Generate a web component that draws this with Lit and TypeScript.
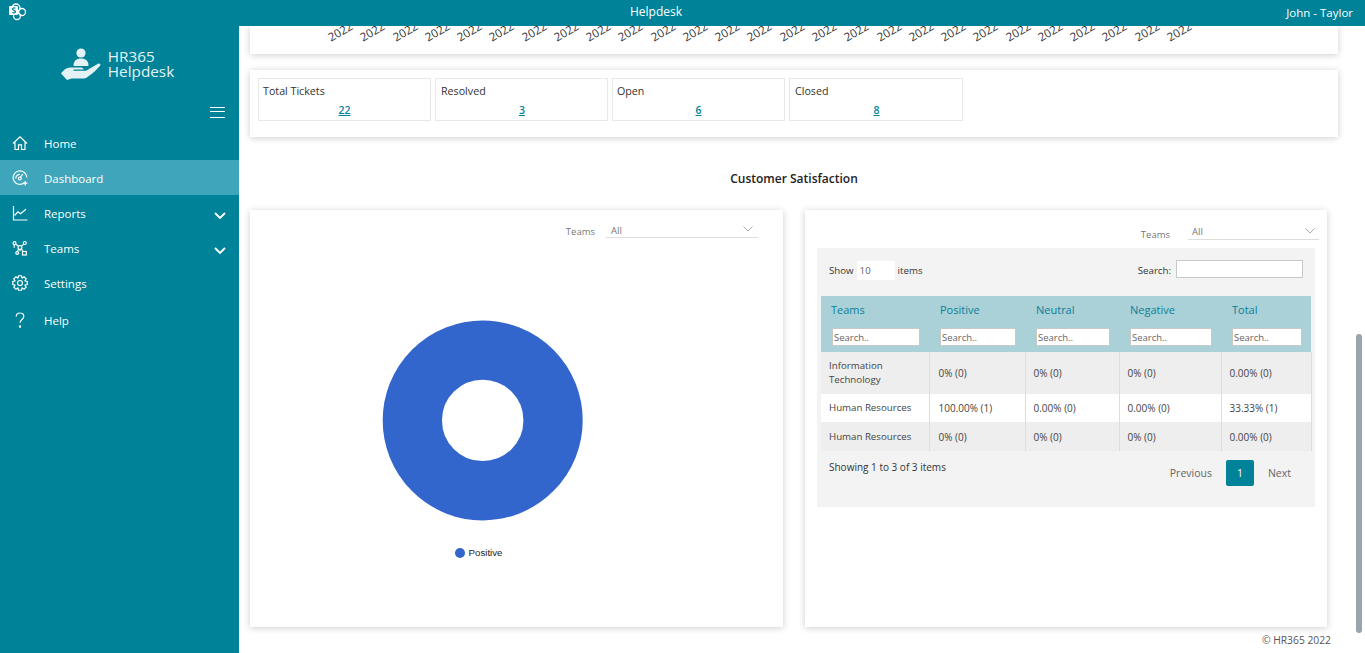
import { LitElement, html, css, svg } from "lit";
import { customElement } from "lit/decorators.js";

const gear = (() => {
  const pts: string[] = [];
  for (let i = 0; i < 8; i++) {
    const a = (i * Math.PI) / 4;
    const p = (r: number, d: number) =>
      `${(8 + r * Math.cos(a + d)).toFixed(2)} ${(8 + r * Math.sin(a + d)).toFixed(2)}`;
    pts.push(p(5.4, -0.38), p(7.4, -0.2), p(7.4, 0.2), p(5.4, 0.38));
  }
  return `M${pts.join("L")}z`;
})();

const icons: Record<string, unknown> = {
  home: svg`<path d="M1 8.500 8 1.800l7 6.700M3 7.300v7.200h3.500v-4.700h3v4.700H13V7.300"/>`,
  dash: svg`<path d="M12.400 12.800A6.800 6.800 0 1 1 14.800 7.500"/><path d="M7.800 8l3-3.800"/><path d="M3.800 8.500a4 4 0 0 1 4-4.200"/><circle cx="7.800" cy="8.500" r="1.500"/><path d="M13.200 11v4.400M11 13.200h4.400"/>`,
  reports: svg`<path d="M1.500 1v14h14"/><path d="M2.500 10.500 6 6.800l2.500 2L14 4.300"/>`,
  teams: svg`<circle cx="2.500" cy="3.200" r="1.500"/><circle cx="8" cy="7.500" r="1.900"/><circle cx="12.800" cy="3" r="1.500"/><path d="M3.800 4.200 6.500 6.300M11.800 4.100 9.300 6.200M2.200 4.800v3M8 9.300v2M6.500 9l-1 2.500M9.500 9l1.500 2.500"/><circle cx="5.200" cy="13" r="1.400"/><rect x="10.500" y="11.500" width="3.800" height="3.500"/>`,
  settings: svg`<circle cx="8" cy="8" r="2.500"/><path d="${gear}"/>`,
  help: svg`<path d="M4.200 4.500A3.700 3.700 0 0 1 8 1c2.200 0 3.800 1.500 3.800 3.400 0 3-3.800 3.200-3.800 6.400"/><circle cx="8" cy="14.500" r=".6"/>`,
};

const nav = [
  { label: "Home", icon: "home" },
  { label: "Dashboard", icon: "dash", active: true },
  { label: "Reports", icon: "reports", more: true },
  { label: "Teams", icon: "teams", more: true },
  { label: "Settings", icon: "settings" },
  { label: "Help", icon: "help" },
];

const stats = [
  ["Total Tickets", "22"],
  ["Resolved", "3"],
  ["Open", "6"],
  ["Closed", "8"],
];

const rows = [
  ["Information Technology", "0% (0)", "0% (0)", "0% (0)", "0.00% (0)"],
  ["Human Resources", "100.00% (1)", "0.00% (0)", "0.00% (0)", "33.33% (1)"],
  ["Human Resources", "0% (0)", "0% (0)", "0% (0)", "0.00% (0)"],
];

const cols = ["Teams", "Positive", "Neutral", "Negative", "Total"];
const years = Array.from({ length: 27 }, () => "2022-01");

@customElement("app-root")
export class AppRoot extends LitElement {
  static styles = css`
    :host {
      display: flex;
      flex-direction: column;
      height: 653px;
      overflow: hidden;
      position: relative;
      background: #fff;
      font-family: "Open Sans", "Noto Sans", sans-serif;
      font-size: 10px;
      color: #333;
    }
    .top {
      height: 26px;
      flex: none;
      background: #008299;
      color: #fff;
      display: grid;
      grid-template-columns: 1fr auto 1fr;
      align-items: center;
      position: relative;
      z-index: 2;
      padding: 0 12px 0 9px;
    }
    .top .title { font-size: 12px; margin-right: 50px; transform: translateY(-2px); }
    .top .user { font-size: 11.500px; justify-self: end; transform: translateY(-1px); }
    .top svg { display: block; transform: translateY(-1px); }
    .body { flex: 1; display: flex; min-height: 0; }
    .side { width: 239px; flex: none; background: #008299; color: #fff; }
    .logo {
      height: 76px;
      display: flex;
      justify-content: center;
      align-items: center;
      gap: 7px;
      transform: translateX(-2px);
    }
    .logo div { font-size: 15.300px; line-height: 15px; font-weight: 500; color: #e4f2f5; }
    .ham { display: flex; justify-content: flex-end; padding: 0 14px 0 0; height: 23px; }
    .ham i { display: block; width: 15px; height: 9px; margin-top: 5px; border-top: 1px solid #fff; border-bottom: 1px solid #fff; position: relative; }
    .ham i::after { content: ""; position: absolute; left: 0; right: 0; top: 3px; height: 1px; background: #fff; }
    .item {
      height: 35px;
      display: flex;
      align-items: center;
      padding: 0 13px 0 12px;
      font-size: 11.500px;
    }
    .item:last-child { padding-top: 2px; }
    .item.on { background: #3fa5bb; }
    .item svg.ic { width: 16px; height: 16px; fill: none; stroke: #fff; stroke-width: 1.200; margin-right: 16px; }
    .item span { flex: 1; transform: translateY(1px); }
    .item svg.ch { width: 12px; height: 8px; fill: none; stroke: #fff; stroke-width: 1.800; transform: translateY(3px); }
    .main { flex: 1; min-width: 0; padding: 0 27px 0 11px; display: flex; flex-direction: column; position: relative; }
    .card { background: #fff; box-shadow: 0 1px 7px rgba(0, 0, 0, 0.2); }
    .axis { height: 28px; display: flex; padding-left: 84px; }
    .axis span {
      width: 32.270px;
      flex: none;
      height: 21px;
      white-space: nowrap;
      font-size: 11.500px;
      line-height: 21px;
      transform-origin: 0 100%;
      transform: rotate(-30deg);
      color: #333;
    }
    .stats { margin-top: 16px; height: 67px; display: flex; gap: 4px; padding: 8px; box-sizing: border-box; }
    .stat { width: 173px; height: 43px; box-sizing: border-box; border: 1px solid #e8e8e8; padding: 5px 4px 0; font-size: 10.700px; }
    .stat:nth-child(2) { padding-left: 5px; }
    .stat:last-child { width: 174px; padding-left: 5px; }
    .stat a { display: block; text-align: center; color: #008299; font-weight: 600; text-decoration: underline; margin-top: 5px; font-size: 10.500px; }
    h2 { margin: 32px 0 0; height: 41px; line-height: 20px; text-align: center; font-size: 12px; font-weight: 600; color: #222; }
    .panels { display: flex; gap: 22px; height: 417px; }
    .left { width: 533px; display: flex; flex-direction: column; }
    .right { width: 522px; }
    .filter { display: flex; align-items: flex-end; justify-content: flex-end; color: #777; gap: 11px; height: 28px; padding-right: 25px; font-size: 9.500px; }
    .right .filter { height: 30px; padding-right: 8px; gap: 18px; }
    .select { width: 152px; height: 14px; border-bottom: 1px solid #ddd; display: flex; justify-content: space-between; padding: 0 5px; box-sizing: border-box; line-height: 12px; margin-top: 1px; }
    .left .select { line-height: 14px; }
    .right .select { width: 131px; padding: 0 4px; }
    .select svg { width: 10px; height: 6px; fill: none; stroke: #aaa; margin-top: 2px; }
    .right label { transform: translateY(1px); }
    .chart { display: flex; flex-direction: column; align-items: center; padding-right: 68px; }
    .donut { margin-top: 82px; display: block; }
    .legend { display: flex; align-items: center; gap: 4px; margin-top: 25px; font-family: "Liberation Sans", sans-serif; font-size: 9.700px; color: #222; transform: translateX(-4px); }
    .legend i { width: 10px; height: 10px; border-radius: 50%; background: #36c; }
    .box { margin: 8px 12px 0; height: 259px; background: #f3f3f3; padding: 0 4px; box-sizing: border-box; }
    .tools { height: 44px; margin-bottom: 4px; display: flex; justify-content: space-between; align-items: center; padding: 0 8px; font-size: 9.700px; }
    .tools > div { display: flex; align-items: center; gap: 3px; }
    .tools .num { width: 38px; height: 19px; background: #fff; box-sizing: border-box; padding: 3px; color: #666; line-height: 14px; }
    .tools .q { width: 127px; height: 18px; background: #fff; border: 1px solid #c8c8c8; box-sizing: border-box; margin-left: 2px; transform: translateY(-1px); }
    table { border-collapse: collapse; table-layout: fixed; width: 490px; }
    .c1 { width: 108px; } .c2 { width: 96px; } .c3 { width: 94px; } .c4 { width: 102px; } .c5 { width: 90px; }
    th { background: #aad0d8; height: 56px; padding: 0 0 0 11px; text-align: left; font-weight: 400; color: #0a7f96; font-size: 11px; vertical-align: top; }
    th div { height: 32px; line-height: 28px; }
    th:first-child div { margin-left: -1px; }
    th p { margin: 0; width: calc(100% - 9px); height: 18px; box-sizing: border-box; background: #fff; border: 1px solid #c8c8c8; color: #666; font-size: 9.500px; line-height: 17px; padding-left: 1px; }
    td { padding: 0 8px; border-right: 1px solid #ddd; line-height: 14px; color: #444; }
    td:first-child { font-size: 9.700px; }
    td:nth-child(2) { padding-left: 9px; }
    tr.a td { background: #eee; }
    tr.b td { background: #fff; }
    tr.r0 { height: 42px; } tr.r1 { height: 28px; } tr.r2 { height: 29px; }
    .foot { display: flex; justify-content: space-between; padding: 9px 8px 0; }
    .pager { display: flex; align-items: center; gap: 14px; color: #666; font-size: 10.500px; margin-right: 12px; }
    .pager b { width: 28px; height: 26px; display: flex; justify-content: center; align-items: center; background: #008299; color: #fff; font-weight: 400; border-radius: 2px; }
    .copy { text-align: right; padding: 6px 7px 0 0; color: #555; font-size: 10.300px; }
    .bar { position: absolute; left: 1356px; top: 334px; width: 6px; height: 299px; background: #9aa4ad; border-radius: 3px; }
  `;

  render() {
    return html`
      <header class="top">
        <svg width="18" height="18" viewBox="0 0 18 18">
          <circle cx="7" cy="5" r="4" fill="none" stroke="#fff" stroke-width="1.300" />
          <circle cx="13" cy="9" r="3.500" fill="none" stroke="#fff" stroke-width="1.300" />
          <circle cx="8" cy="13" r="3.500" fill="none" stroke="#fff" stroke-width="1.300" />
          <rect x="0" y="3" width="9" height="9" rx="1" fill="#fff" />
          <path d="M6.500 5.300c-1.500-.7-3-.3-3 .8 0 1.500 3 1 3 2.700 0 1.100-1.700 1.400-3.200.7" fill="none" stroke="#008299" stroke-width="1.200" />
        </svg>
        <div class="title">Helpdesk</div>
        <div class="user">John - Taylor</div>
      </header>
      <div class="body">
        <aside class="side">
          <div class="logo">
            <svg width="40" height="32" viewBox="0 0 40 32" fill="#e4f2f5">
              <circle cx="20" cy="5" r="4.600" />
              <path d="M12.500 17c0-3.800 3-6.500 7.500-6.500s7.500 2.700 7.500 6.500c0 .6-.4 1-1 1h-13c-.6 0-1-.4-1-1z" />
              <path d="M1 26.500c-1-.5-1-1.200-.3-2C2.800 22 5.500 19.500 9 19.500h10c2 0 3.500.6 3.500 2h-10v1.200h12.500L37 15.800c1.300-.7 3 .4 2.300 1.600C36 21.500 31 26 26.500 29c-1.500 1-3 1.500-5 1.500H10.500L6 32z" />
            </svg>
            <div>HR365<br />Helpdesk</div>
          </div>
          <div class="ham"><i></i></div>
          ${nav.map(
            (n) => html`<div class="item ${n.active ? "on" : ""}">
              <svg class="ic" viewBox="0 0 16 16">${icons[n.icon]}</svg>
              <span>${n.label}</span>
              ${n.more
                ? html`<svg class="ch" viewBox="0 0 12 8"><path d="M1 1l5 5 5-5" /></svg>`
                : ""}
            </div>`
          )}
        </aside>
        <main class="main">
          <section class="card axis">${years.map((y) => html`<span>${y}</span>`)}</section>
          <section class="card stats">
            ${stats.map(([k, v]) => html`<div class="stat">${k}<a>${v}</a></div>`)}
          </section>
          <h2>Customer Satisfaction</h2>
          <div class="panels">
            <section class="card left">
              <div class="filter">
                <label>Teams</label>
                <div class="select">All<svg viewBox="0 0 10 6"><path d="M.5.500 5 5 9.500.500" /></svg></div>
              </div>
              <div class="chart">
                <svg class="donut" width="202" height="202" viewBox="0 0 202 202">
                  <circle cx="100.700" cy="100.400" r="70.350" fill="none" stroke="#36c" stroke-width="59.300" />
                </svg>
                <div class="legend"><i></i>Positive</div>
              </div>
            </section>
            <section class="card right">
              <div class="filter">
                <label>Teams</label>
                <div class="select">All<svg viewBox="0 0 10 6"><path d="M.5.500 5 5 9.500.500" /></svg></div>
              </div>
              <div class="box">
                <div class="tools">
                  <div>Show <span class="num">10</span> items</div>
                  <div>Search: <span class="q"></span></div>
                </div>
                <table>
                  <colgroup>
                    ${cols.map((_, i) => html`<col class="c${i + 1}" />`)}
                  </colgroup>
                  <thead>
                    <tr>${cols.map((c) => html`<th><div>${c}</div><p>Search..</p></th>`)}</tr>
                  </thead>
                  <tbody>
                    ${rows.map(
                      (r, i) => html`<tr class="${i === 1 ? "b" : "a"} r${i}">
                        ${r.map((c) => html`<td>${c}</td>`)}
                      </tr>`
                    )}
                  </tbody>
                </table>
                <div class="foot">
                  <div>Showing 1 to 3 of 3 items</div>
                  <div class="pager"><span>Previous</span><b>1</b><span>Next</span></div>
                </div>
              </div>
            </section>
          </div>
          <div class="copy">© HR365 2022</div>
        </main>
      </div>
      <div class="bar"></div>
    `;
  }
}
